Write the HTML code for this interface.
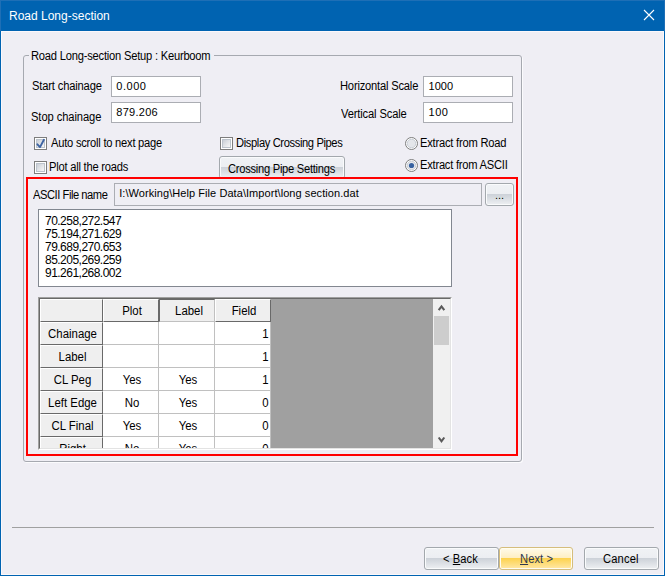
<!DOCTYPE html>
<html><head><meta charset="utf-8">
<style>
*{margin:0;padding:0;box-sizing:border-box}
html,body{width:665px;height:576px;overflow:hidden}
body{position:relative;background:#efeef4;font-family:"Liberation Sans",sans-serif;color:#000;font-size:11px}
.a{position:absolute}
.t{position:absolute;white-space:nowrap;font-size:11px;line-height:13px;letter-spacing:-0.2px}
.win{left:0;top:0;width:665px;height:576px;border:1px solid #0063b1;border-top:0}
.inner{left:1px;top:31px;width:663px;height:544px;border:1px solid #fbf8fb}
.title{left:0;top:0;width:665px;height:31px;background:#0063b1}
.inp{position:absolute;background:#fff;border:1px solid #abadb3}
.chk{position:absolute;width:13px;height:13px;border:1px solid #7d7d7d;background:#fff}
.chk::after{content:"";position:absolute;left:1px;top:1px;width:9px;height:9px;box-sizing:border-box;border:1px solid #bcc3cc;background:linear-gradient(135deg,#c9ced6 0,#dfe2e6 45%,#f7f7f7 100%)}
.rad{position:absolute;width:13px;height:13px}
.btn2{position:absolute;border:1px solid #a3a8ad;border-radius:3px;box-shadow:inset 0 0 0 1px #fafbfc;background:linear-gradient(#f0f2f5 0,#eceef2 50%,#cdd2d9 50%,#eef0f3 100%)}
.hc{position:absolute;background:#efefef;border-left:1px solid #fff;border-top:1px solid #fff;border-right:1px solid #696969;border-bottom:1px solid #696969}
.hs{position:absolute;background:#efefef;border-left:1px solid #696969;border-top:1px solid #696969;border-right:1px solid #c0c0c0;border-bottom:1px solid #c0c0c0}
.dc{position:absolute;background:#fff;border-right:1px solid #c0c0c0;border-bottom:1px solid #c0c0c0}
.gt{position:absolute;font-size:12px;line-height:13px;white-space:nowrap;transform:scaleX(0.95);transform-origin:50% 0;margin-left:1px}
.L{position:absolute;white-space:nowrap;font-size:12px;line-height:14px;transform:scaleX(0.93);transform-origin:0 0}
.V{position:absolute;white-space:nowrap;font-size:11px;line-height:13px}
.cell{position:absolute;font-size:11px;line-height:13px;white-space:nowrap;letter-spacing:-0.2px}
</style></head><body>
<div class="a win"></div>
<div class="a inner"></div>
<div class="a title"></div>
<div class="a" style="left:0;top:0;width:665px;height:31px;border:1px solid #1e6fb6;border-bottom:0"></div>
<div class="t" style="left:9px;top:10px;color:#fff;font-size:12px;letter-spacing:0">Road Long-section</div>
<svg class="a" style="left:643px;top:9px" width="12" height="12" viewBox="0 0 12 12"><path d="M1 1L11 11M11 1L1 11" stroke="#fff" stroke-width="1.1"/></svg>

<!-- group box -->
<div class="a" style="left:23px;top:55px;width:499px;height:407px;border:1px solid #a6a9b0;border-radius:3px;box-shadow:1px 1px 0 #fbfbfd"></div>
<div class="a" style="left:29px;top:50px;width:185px;height:12px;background:#efeef4"></div>

<div class="inp" style="left:111px;top:76px;width:90px;height:21px"></div>
<div class="inp" style="left:111px;top:102px;width:90px;height:21px"></div>

<div class="inp" style="left:423px;top:76px;width:90px;height:21px"></div>
<div class="inp" style="left:423px;top:102px;width:90px;height:21px"></div>

<div class="chk" style="left:34px;top:137px"></div>
<svg class="a" style="left:34px;top:137px" width="13" height="13"><path d="M3.4 7.3L6 10.1L9.9 2.8" stroke="#3e64a3" stroke-width="1.9" fill="none" stroke-linecap="round" stroke-linejoin="round"/></svg>
<div class="chk" style="left:34px;top:161px"></div>

<div class="chk" style="left:220px;top:137px"></div>
<div class="btn2" style="left:219px;top:156px;width:126px;height:23px"></div>

<svg class="a" style="left:405px;top:137px" width="13" height="13"><circle cx="6.5" cy="6.5" r="6" fill="#fff" stroke="#7d7d7d" stroke-width="1"/><circle cx="6.5" cy="6.5" r="4.3" fill="#e4e6ea" stroke="#bcc3cc" stroke-width="0.8"/></svg>
<svg class="a" style="left:405px;top:159px" width="13" height="13"><circle cx="6.5" cy="6.5" r="6" fill="#fff" stroke="#7d7d7d" stroke-width="1"/><circle cx="6.5" cy="6.5" r="4.3" fill="#e4e6ea" stroke="#bcc3cc" stroke-width="0.8"/><circle cx="6.5" cy="6.5" r="2.6" fill="#3762a0"/></svg>

<!-- red box -->
<div class="a" style="left:26px;top:177px;width:492px;height:279px;border:2px solid #ff0000"></div>
<div class="a" style="left:114px;top:183px;width:368px;height:23px;border:1px solid #abadb3;background:#efeef4"></div>
<div class="btn2" style="left:485px;top:183px;width:29px;height:23px"></div>
<div class="t" style="left:495px;top:189px;letter-spacing:0">...</div>

<div class="inp" style="left:38px;top:209px;width:414px;height:78px;border-color:#828790"></div>
<div class="t" style="left:45px;top:215px;font-size:12px;letter-spacing:-0.52px;line-height:13px">70.258,272.547<br>75.194,271.629<br>79.689,270.653<br>85.205,269.259<br>91.261,268.002</div>

<!-- grid -->
<div class="a" style="left:38px;top:297px;width:414px;height:153px;border-top:1px solid #a0a0a0;border-left:1px solid #a0a0a0;border-right:1px solid #fff;border-bottom:1px solid #fff"></div>
<div class="a" style="left:39px;top:298px;width:412px;height:151px;border-top:1px solid #696969;border-left:1px solid #696969;border-right:1px solid #e3e3e3;border-bottom:1px solid #e3e3e3"></div>
<div class="a" style="left:40px;top:299px;width:410px;height:149px;overflow:hidden;background:#a0a0a0">
<div class="hc" style="left:0;top:0;width:63px;height:23px"></div>
<div class="hc" style="left:63px;top:0;width:56px;height:23px"></div>
<div class="gt" style="left:63px;top:6px;width:56px;text-align:center">Plot</div>
<div class="hs" style="left:119px;top:0;width:56px;height:23px"></div>
<div class="gt" style="left:120px;top:6px;width:56px;text-align:center">Label</div>
<div class="hc" style="left:175px;top:0;width:56px;height:23px"></div>
<div class="gt" style="left:175px;top:6px;width:56px;text-align:center">Field</div>
<div class="hc" style="left:0;top:23px;width:63px;height:23px"></div>
<div class="gt" style="left:0;top:29px;width:63px;text-align:center">Chainage</div>
<div class="dc" style="left:63px;top:23px;width:56px;height:23px"></div>
<div class="dc" style="left:119px;top:23px;width:56px;height:23px"></div>
<div class="dc" style="left:175px;top:23px;width:56px;height:23px"></div>
<div class="gt" style="left:175px;top:29px;width:54px;text-align:right">1</div>
<div class="hc" style="left:0;top:46px;width:63px;height:23px"></div>
<div class="gt" style="left:0;top:52px;width:63px;text-align:center">Label</div>
<div class="dc" style="left:63px;top:46px;width:56px;height:23px"></div>
<div class="dc" style="left:119px;top:46px;width:56px;height:23px"></div>
<div class="dc" style="left:175px;top:46px;width:56px;height:23px"></div>
<div class="gt" style="left:175px;top:52px;width:54px;text-align:right">1</div>
<div class="hc" style="left:0;top:69px;width:63px;height:23px"></div>
<div class="gt" style="left:0;top:75px;width:63px;text-align:center">CL Peg</div>
<div class="dc" style="left:63px;top:69px;width:56px;height:23px"></div>
<div class="gt" style="left:63px;top:75px;width:56px;text-align:center">Yes</div>
<div class="dc" style="left:119px;top:69px;width:56px;height:23px"></div>
<div class="gt" style="left:119px;top:75px;width:56px;text-align:center">Yes</div>
<div class="dc" style="left:175px;top:69px;width:56px;height:23px"></div>
<div class="gt" style="left:175px;top:75px;width:54px;text-align:right">1</div>
<div class="hc" style="left:0;top:92px;width:63px;height:23px"></div>
<div class="gt" style="left:0;top:98px;width:63px;text-align:center">Left Edge</div>
<div class="dc" style="left:63px;top:92px;width:56px;height:23px"></div>
<div class="gt" style="left:63px;top:98px;width:56px;text-align:center">No</div>
<div class="dc" style="left:119px;top:92px;width:56px;height:23px"></div>
<div class="gt" style="left:119px;top:98px;width:56px;text-align:center">Yes</div>
<div class="dc" style="left:175px;top:92px;width:56px;height:23px"></div>
<div class="gt" style="left:175px;top:98px;width:54px;text-align:right">0</div>
<div class="hc" style="left:0;top:115px;width:63px;height:23px"></div>
<div class="gt" style="left:0;top:121px;width:63px;text-align:center">CL Final</div>
<div class="dc" style="left:63px;top:115px;width:56px;height:23px"></div>
<div class="gt" style="left:63px;top:121px;width:56px;text-align:center">Yes</div>
<div class="dc" style="left:119px;top:115px;width:56px;height:23px"></div>
<div class="gt" style="left:119px;top:121px;width:56px;text-align:center">Yes</div>
<div class="dc" style="left:175px;top:115px;width:56px;height:23px"></div>
<div class="gt" style="left:175px;top:121px;width:54px;text-align:right">0</div>
<div class="hc" style="left:0;top:138px;width:63px;height:23px"></div>
<div class="gt" style="left:0;top:144px;width:63px;text-align:center">Right</div>
<div class="dc" style="left:63px;top:138px;width:56px;height:23px"></div>
<div class="gt" style="left:63px;top:144px;width:56px;text-align:center">No</div>
<div class="dc" style="left:119px;top:138px;width:56px;height:23px"></div>
<div class="gt" style="left:119px;top:144px;width:56px;text-align:center">Yes</div>
<div class="dc" style="left:175px;top:138px;width:56px;height:23px"></div>
<div class="gt" style="left:175px;top:144px;width:54px;text-align:right">0</div>
<div class="a" style="left:393px;top:0;width:17px;height:149px;background:#f0f0f0"></div>
<div class="a" style="left:394px;top:17px;width:15px;height:29px;background:#cdcdcd"></div>
<svg class="a" style="left:393px;top:0" width="17" height="17"><path d="M5.7 11.2L8.5 7.4L11.3 11.2" stroke="#5a5a5a" stroke-width="2.1" fill="none" stroke-linejoin="miter"/></svg>
<svg class="a" style="left:393px;top:132px" width="17" height="17"><path d="M5.7 6.5L8.5 10.3L11.3 6.5" stroke="#5a5a5a" stroke-width="2.1" fill="none" stroke-linejoin="miter"/></svg>
</div>
<!-- separator -->
<div class="a" style="left:12px;top:527px;width:642px;height:1px;background:#a0a0a0"></div>

<div class="btn2" style="left:424px;top:547px;width:75px;height:23px"></div>
<div class="a" style="left:499px;top:547px;width:74px;height:23px;border:1px solid #d5bd7c;border-radius:3px;box-shadow:inset 0 0 0 1px #fffdf2;background:linear-gradient(#fffbea 0,#feeec0 50%,#fdd350 50%,#ffe8a8 100%)"></div>
<div class="btn2" style="left:584px;top:547px;width:75px;height:23px"></div>
<!--LABELS-->
<div class="L" style="left:31.30px;top:49px;letter-spacing:-0.231px">Road Long-section Setup : Keurboom</div>
<div class="L" style="left:32.30px;top:79px;letter-spacing:-0.169px">Start chainage</div>
<div class="L" style="left:31.30px;top:110px;letter-spacing:-0.085px">Stop chainage</div>
<div class="L" style="left:340.26px;top:79px;letter-spacing:-0.209px">Horizontal Scale</div>
<div class="L" style="left:341.48px;top:107px;letter-spacing:-0.153px">Vertical Scale</div>
<div class="L" style="left:50.70px;top:136px;letter-spacing:-0.252px">Auto scroll to next page</div>
<div class="L" style="left:49.30px;top:160px;letter-spacing:-0.242px">Plot all the roads</div>
<div class="L" style="left:235.52px;top:136px;letter-spacing:-0.408px">Display Crossing Pipes</div>
<div class="L" style="left:227.78px;top:162px;letter-spacing:-0.287px">Crossing Pipe Settings</div>
<div class="L" style="left:420.26px;top:136px;letter-spacing:-0.236px">Extract from Road</div>
<div class="L" style="left:420.26px;top:158px;letter-spacing:-0.255px">Extract from ASCII</div>
<div class="L" style="left:33.32px;top:188px;letter-spacing:-0.488px">ASCII File name</div>
<div class="L" style="left:443.10px;top:552px;letter-spacing:0.081px">&lt; <u>B</u>ack</div>
<div class="L" style="left:520.10px;top:552px;letter-spacing:0.072px;color:#2e3850"><u>N</u>ext &gt;</div>
<div class="L" style="left:603.40px;top:552px;letter-spacing:0.163px">Cancel</div>
<div class="V" style="left:116.30px;top:80px;letter-spacing:0.534px">0.000</div>
<div class="V" style="left:116.30px;top:106px;letter-spacing:0.265px">879.206</div>
<div class="V" style="left:428.60px;top:80px;letter-spacing:0.000px">1000</div>
<div class="V" style="left:428.60px;top:106px;letter-spacing:0.462px">100</div>
<div class="V" style="left:119.20px;top:187px;letter-spacing:0.065px">I:\Working\Help File Data\Import\long section.dat</div>
<!--/LABELS-->
</body></html>
